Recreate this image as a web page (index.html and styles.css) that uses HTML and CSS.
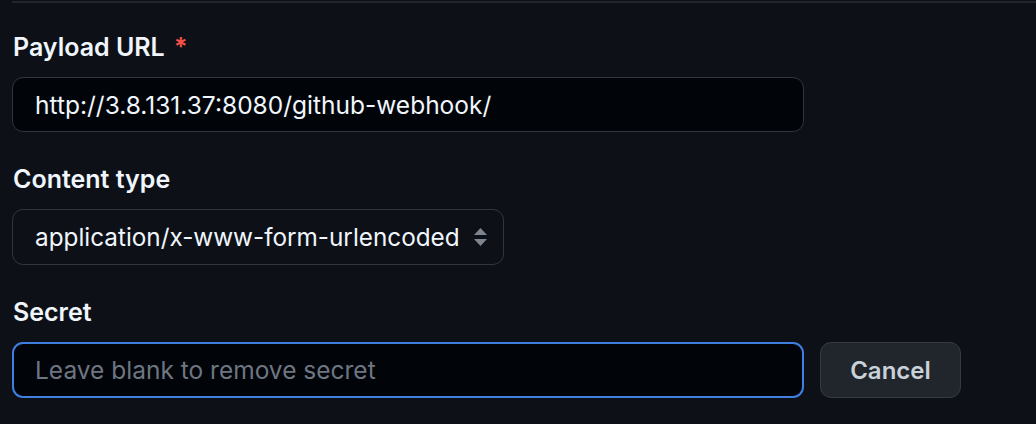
FILE: index.html
```html
<!DOCTYPE html>
<html lang="en">
<head>
<meta charset="utf-8">
<title>Webhook</title>
<link rel="stylesheet" href="styles.css">
</head>
<body>
<div class="page">
  <div class="divider"></div>
  <form class="form">
    <div class="group">
      <label class="label" for="url">Payload URL <span class="req">*</span></label>
      <input id="url" class="input input-dark" type="text" value="http://3.8.131.37:8080/github-webhook/">
    </div>
    <div class="group">
      <label class="label" for="ct">Content type</label>
      <div class="select">
        <span class="select-text">application/x-www-form-urlencoded</span>
        <svg class="select-arrows" width="13" height="19" viewBox="0 0 13 19"><path d="M6.5 0 L13 7 H0 Z M0 11 H13 L6.5 18 Z" fill="#7d8590"/></svg>
      </div>
    </div>
    <div class="group last">
      <label class="label" for="secret">Secret</label>
      <div class="row">
        <input id="secret" class="input input-focus" type="text" placeholder="Leave blank to remove secret">
        <button type="button" class="btn">Cancel</button>
      </div>
    </div>
  </form>
</div>
</body>
</html>
```

FILE: styles.css
```css
* { box-sizing: border-box; }
html, body { margin: 0; padding: 0; background: #0d1117; }
body {
  font-family: Inter, "Liberation Sans", sans-serif;
  color: #e6edf3;
  width: 1036px;
  height: 424px;
  overflow: hidden;
}
.page { padding: 1px 0 0 12px; }
.divider { border-top: 2px solid #21262d; height: 0; }
.form { padding-top: 29px; }
.group { margin-bottom: 32px; }
.group.last { margin-bottom: 0; }
.label {
  display: block;
  font-size: 25px;
  font-weight: 600;
  line-height: 30px;
  margin: 0 0 15px 1px;
  color: #f0f6fc;
}
.req { color: #f85149; margin-left: 3px; }
.input {
  display: block;
  width: 792px;
  height: 55px;
  border-radius: 11px;
  padding: 0 22px;
  font-family: inherit;
  font-size: 24.5px;
  color: #f0f6fc;
  outline: none;
}
.input-dark { background: #010409; border: 1px solid #30363d; }
.input-focus { background: #010409; border: 2px solid #3f7fe0; padding: 0 21px; height: 56px; }
.input::placeholder { color: #6e7681; }
.select {
  width: 492px;
  height: 56px;
  border: 1px solid #30363d;
  border-radius: 11px;
  display: flex;
  align-items: center;
  padding: 0 16px 0 22px;
  justify-content: space-between;
}
.select-text { font-size: 24.3px; color: #f0f6fc; }
.select-arrows { display: block; }
.row { display: flex; gap: 16px; align-items: center; }
.btn {
  width: 141px;
  height: 56px;
  background: #21262d;
  border: 1px solid #353a42;
  border-radius: 11px;
  color: #c9d1d9;
  font-family: inherit;
  font-size: 24px;
  font-weight: 600;
}
```
